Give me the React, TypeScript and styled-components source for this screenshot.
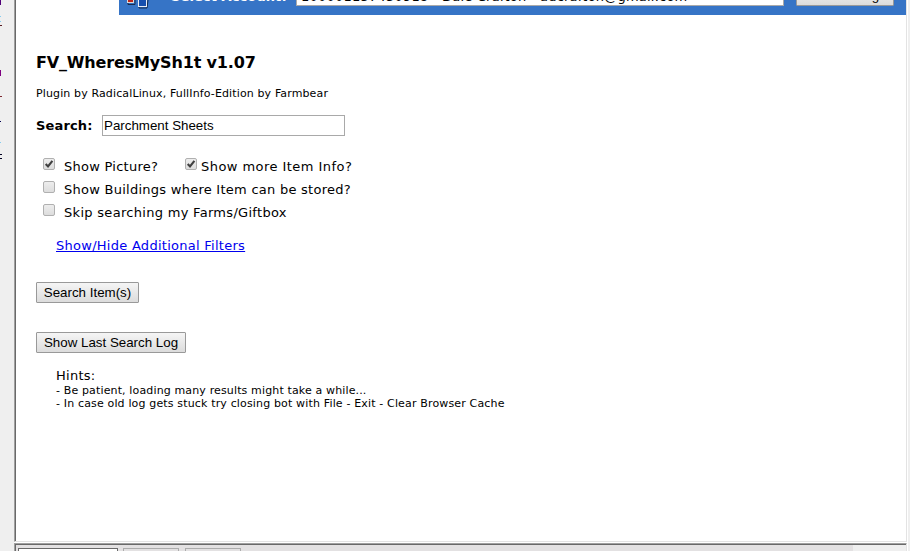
import React from "react";
import styled, { createGlobalStyle } from "styled-components";

const Global = createGlobalStyle`
  * { box-sizing: border-box; }
  html, body { margin: 0; padding: 0; overflow: hidden; }
  body { background: #efefef; color: #000; font-family: Verdana, "DejaVu Sans", sans-serif; }
`;

const Window = styled.div`
  display: grid;
  grid-template-columns: 14px 893px 3px;
  width: 910px;
  height: 551px;
  overflow: hidden;
`;

const Gutter = styled.aside`
  height: 551px;
  background: #efefef;
`;

const Mark = styled.div<{ $gap: number; $w?: number; $h?: number; $color: string }>`
  margin-top: ${(p) => p.$gap}px;
  width: ${(p) => p.$w ?? 1}px;
  height: ${(p) => p.$h ?? 1}px;
  background: ${(p) => p.$color};
`;

const RightEdge = styled.div`
  background: #efefef;
  border-left: 1px solid #fff;
`;

const Main = styled.div`
  display: flex;
  flex-direction: column;
  height: 551px;
  overflow: hidden;
  background: #fff;
`;

const Frame = styled.main`
  flex: none;
  height: 542px;
  background: #fff;
  border-left: 1px solid #a0a0a0;
  border-right: 1px solid #e3e3e3;
  border-bottom: 1px solid #e3e3e3;
`;

const FrameInner = styled.div`
  height: 541px;
  border-left: 1px solid #696969;
`;

const Header = styled.header`
  display: flex;
  height: 15px;
  margin-left: 103px;
  background: #3674c6;
  overflow: hidden;
`;

const Logo = styled.svg`
  flex: none;
  width: 52px;
  height: 15px;
`;

const AccountLabel = styled.div`
  width: 125px;
  height: 19px;
  margin-top: -13px;
  color: #fff;
  font-size: 13px;
  font-weight: bold;
  line-height: 19px;
  letter-spacing: 0.1px;
  white-space: nowrap;
`;

const AccountSelect = styled.div`
  width: 488px;
  height: 22px;
  margin-top: -16px;
  padding-left: 4px;
  background: #fff;
  border: 1px solid #a9a9a9;
  font-size: 13px;
  line-height: 24px;
  letter-spacing: 0.22px;
  white-space: nowrap;
`;

const Button = styled.button<{ $w: number }>`
  display: block;
  width: ${(p) => p.$w}px;
  height: 21px;
  padding: 0;
  border: 1px solid #999;
  border-radius: 1px;
  background: linear-gradient(#f5f5f5, #dcdcdc);
  color: #000;
  font: 13.333px/19px Arial, "Liberation Sans", sans-serif;
  text-align: center;
  white-space: nowrap;
`;

const HeaderButton = styled(Button)`
  margin: -15px 0 0 12px;
`;

const Content = styled.section`
  padding: 38px 0 0 20px;
`;

const Line = styled.div<{ $size: number; $h: number; $ls?: number; $indent?: number }>`
  height: ${(p) => p.$h}px;
  padding-left: ${(p) => p.$indent ?? 0}px;
  font-size: ${(p) => p.$size}px;
  line-height: ${(p) => p.$h}px;
  letter-spacing: ${(p) => p.$ls ?? 0}px;
  white-space: nowrap;
`;

const Title = styled.h1`
  height: 20px;
  margin: 0 0 14px;
  font-size: 16px;
  line-height: 20px;
  letter-spacing: -0.16px;
  white-space: nowrap;
`;

const SearchRow = styled.div`
  display: grid;
  grid-template-columns: 66px 243px;
  height: 21px;
  margin: 14px 0 19px;
`;

const SearchLabel = styled.label`
  font-size: 13px;
  font-weight: bold;
  line-height: 21px;
  letter-spacing: 0.15px;
`;

const SearchInput = styled.input`
  width: 243px;
  height: 21px;
  padding: 0 1px;
  border: 1px solid #a9a9a9;
  background: #fff;
  color: #000;
  font: 13.333px/19px Arial, "Liberation Sans", sans-serif;
`;

const OptionRow = styled.div`
  display: flex;
  height: 23px;
  padding-left: 7px;
`;

const Option = styled.label<{ $w?: number; $gap: number; $ls?: number }>`
  display: flex;
  gap: ${(p) => p.$gap}px;
  width: ${(p) => (p.$w ? p.$w + "px" : "auto")};
  font-size: 13px;
  line-height: 23px;
  letter-spacing: ${(p) => p.$ls ?? 0.26}px;
  white-space: nowrap;
`;

const Box = styled.svg`
  flex: none;
  width: 12px;
  height: 12px;
  margin-top: 3px;
`;

const Check = ({ on = false }: { on?: boolean }) => (
  <Box viewBox="0 0 12 12">
    <defs>
      <linearGradient id="face" x1="0" y1="0" x2="0" y2="1">
        <stop offset="0" stopColor="#eee" />
        <stop offset="1" stopColor="#dcdcdc" />
      </linearGradient>
    </defs>
    <rect x="0.5" y="0.5" width="11" height="11" rx="1.5" fill="url(#face)" stroke="#b0b0b0" />
    {on && <path d="M2.7 6.1 5 8.5 9.4 2.8" fill="none" stroke="#404040" strokeWidth="2.1" />}
  </Box>
);

const Link = styled.a`
  color: #0000ee;
  text-decoration: underline;
`;

const FilterLine = styled(Line)`
  margin: 10px 0 25px;
`;

const Hints = styled.div`
  margin-top: 15px;
  padding-left: 20px;
`;

const Spaced = styled.div`
  margin-top: 29px;
`;

const Bottom = styled.footer`
  flex: none;
  height: 8px;
  margin-top: 1px;
  border-top: 1px solid #a0a0a0;
  border-left: 1px solid #a0a0a0;
  border-right: 1px solid #e3e3e3;
  background: #efefef;
`;

const TabStrip = styled.div`
  display: flex;
  height: 8px;
  width: 100%;
  padding: 3px 0 0 2px;
  border-top: 1px solid #696969;
  border-left: 1px solid #696969;
  background: linear-gradient(to right, #e3e1e2 837px, #efefef 837px);
`;

const Tab = styled.div<{ $w: number; $gap: number; $active?: boolean }>`
  width: ${(p) => p.$w}px;
  height: 6px;
  margin-right: ${(p) => p.$gap}px;
  border: 1px solid ${(p) => (p.$active ? "#696969" : "#acacac")};
  border-bottom: 0;
  background: ${(p) => (p.$active ? "#fff" : "#e3e1e2")};
`;

export default function App() {
  return (
    <>
      <Global />
      <Window>
        <Gutter>
          <Mark $gap={0} $h={5} $color="#500078" />
          <Mark $gap={11} $color="#86ccef" />
          <Mark $gap={4} $color="#86ccef" />
          <Mark $gap={3} $w={2} $color="#581c22" />
          <Mark $gap={44} $h={6} $color="#7d0080" />
          <Mark $gap={20} $w={2} $color="#7d2630" />
          <Mark $gap={24} $color="#000050" />
          <Mark $gap={20} $color="#86ccef" />
          <Mark $gap={11} $w={2} $color="#000020" />
          <Mark $gap={3} $w={2} $color="#000020" />
        </Gutter>
        <Main>
          <Frame>
            <FrameInner>
              <Header>
                <Logo viewBox="0 0 52 15">
                  <path d="M9 0V4.500H16V0M20 0V8H28L29 0" fill="none" stroke="#172b4d" />
                  <path d="M8 0H15V3H8Z" fill="#d9d9d9" />
                  <path d="M9 0H14V2H9Z" fill="#bd2419" />
                  <path d="M19 0H28V7H19Z" fill="#e8edf5" />
                  <path d="M20 0H27V6H20Z" fill="#164fae" />
                </Logo>
                <AccountLabel>Select Account:</AccountLabel>
                <AccountSelect>100001157450918 - Dale Crafton - adcrafton@gmail.com</AccountSelect>
                <HeaderButton $w={98}>Load Settings</HeaderButton>
              </Header>
              <Content>
                <Title>FV_WheresMySh1t v1.07</Title>
                <Line $size={11} $h={14} $ls={0.13}>Plugin by RadicalLinux, FullInfo-Edition by Farmbear</Line>
                <SearchRow>
                  <SearchLabel>Search:</SearchLabel>
                  <SearchInput defaultValue="Parchment Sheets" />
                </SearchRow>
                <OptionRow>
                  <Option $w={142} $gap={9}><Check on />Show Picture?</Option>
                  <Option $gap={4} $ls={0.45}><Check on />Show more Item Info?</Option>
                </OptionRow>
                <OptionRow>
                  <Option $gap={9}><Check />Show Buildings where Item can be stored?</Option>
                </OptionRow>
                <OptionRow>
                  <Option $gap={9} $ls={0.3}><Check />Skip searching my Farms/Giftbox</Option>
                </OptionRow>
                <FilterLine $size={13} $h={23} $ls={0.27} $indent={20}><Link>Show/Hide Additional Filters</Link></FilterLine>
                <Button $w={103}>Search Item(s)</Button>
                <Spaced><Button $w={150}>Show Last Search Log</Button></Spaced>
                <Hints>
                  <Line $size={13} $h={16} $ls={0.25}>Hints:</Line>
                  <Line $size={11} $h={13} $ls={0.14}>- Be patient, loading many results might take a while...</Line>
                  <Line $size={11} $h={13} $ls={0.155}>- In case old log gets stuck try closing bot with File - Exit - Clear Browser Cache</Line>
                </Hints>
              </Content>
            </FrameInner>
          </Frame>
          <Bottom>
            <TabStrip>
              <Tab $w={100} $gap={5} $active />
              <Tab $w={56} $gap={6} />
              <Tab $w={56} $gap={0} />
            </TabStrip>
          </Bottom>
        </Main>
        <RightEdge />
      </Window>
    </>
  );
}
